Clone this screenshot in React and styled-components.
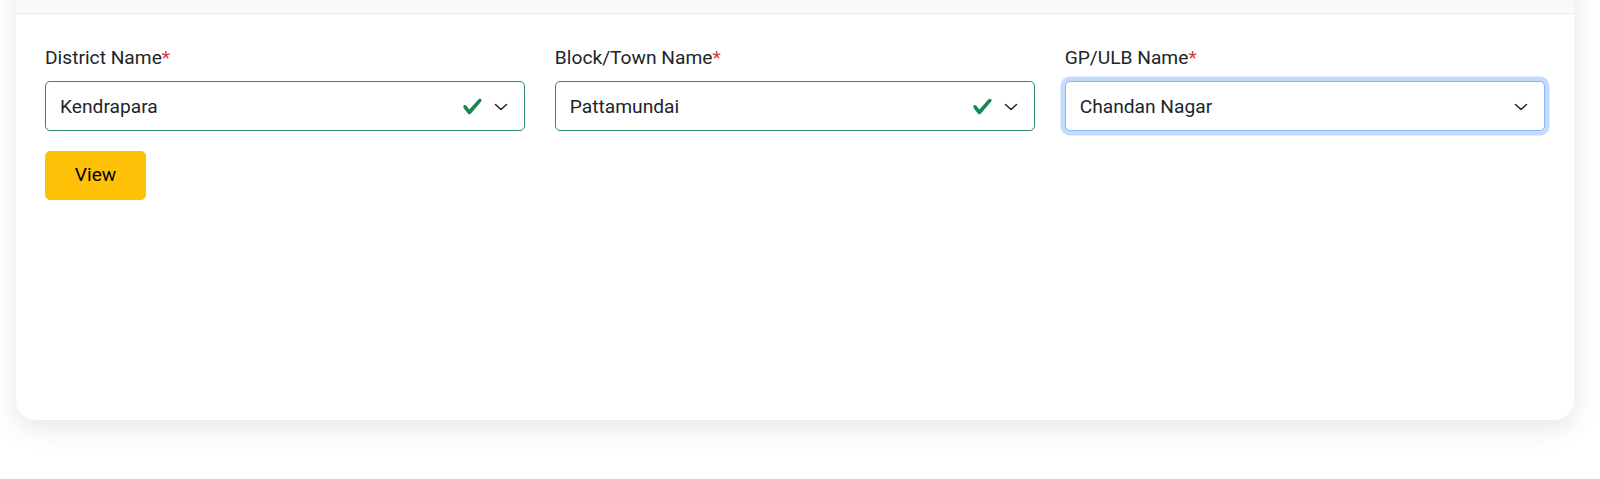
import React from "react";
import styled, { createGlobalStyle, css } from "styled-components";

const GlobalStyle = createGlobalStyle`
  html, body { margin: 0; padding: 0; background: #ffffff; }
  body { font-family: Roboto, "Liberation Sans", Arial, sans-serif; overflow: hidden; }
  * { box-sizing: border-box; }
`;

const Page = styled.div`
  padding: 0 26px 60px 16px;
`;

const Card = styled.section`
  margin-top: -30px;
  background: #ffffff;
  border-radius: 20px;
  box-shadow: 0 8px 28px rgba(0, 0, 0, 0.1);
  overflow: hidden;
`;

const CardHeader = styled.div`
  height: 44px;
  background: linear-gradient(#f4f4f4, #fafafa);
  border-bottom: 1px solid #ebebeb;
`;

const CardBody = styled.div`
  min-height: 406px;
  padding: 30px 29px 29px 29px;
`;

const FieldRow = styled.div`
  display: grid;
  grid-template-columns: repeat(3, 1fr);
  column-gap: 29.5px;
`;

const Field = styled.div`
  display: flex;
  flex-direction: column;
`;

const Label = styled.label`
  font-size: 19.2px;
  line-height: 27.6px;
  color: #212529;
  margin-bottom: 9.8px;
`;

const Required = styled.span`
  color: #dc3545;
`;

const SelectBox = styled.div`
  display: flex;
  align-items: center;
  height: 50px;
  padding: 1px 15px 0 14px;
  background: #ffffff;
  border: 1px solid #dee2e6;
  border-radius: 5px;
  font-size: 19.2px;
  line-height: 27.6px;
  color: #212529;
  ${(p) =>
    p.$state === "valid" &&
    css`
      border-color: #2a8a5c;
    `}
  ${(p) =>
    p.$state === "focus" &&
    css`
      border-color: #86b7fe;
      box-shadow: 0 0 0 4.5px rgba(13, 110, 253, 0.25);
    `}
`;

const SelectValue = styled.span`
  flex: 1;
  white-space: nowrap;
`;

const CheckIcon = styled.svg`
  width: 21px;
  height: 21px;
  margin-right: 10.5px;
  flex-shrink: 0;
`;

const ChevronIcon = styled.svg`
  width: 16px;
  height: 16px;
  flex-shrink: 0;
`;

const ViewButton = styled.button`
  margin-top: 19.4px;
  width: 101px;
  height: 49px;
  border: 1px solid #ffc107;
  border-radius: 5px;
  background: #ffc107;
  color: #000000;
  font-family: inherit;
  font-size: 19.2px;
  line-height: 27.6px;
  padding: 0;
  cursor: pointer;
`;

const Check = () => (
  <CheckIcon viewBox="0 0 8 8" aria-hidden="true">
    <path
      fill="#198754"
      d="M2.3 6.73.6 4.53c-.4-1.04.46-1.4 1.1-.8l1.1 1.4 3.4-3.8c.6-.63 1.6-.27 1.2.7l-4 4.6c-.43.5-.8.4-1.1.1z"
    />
  </CheckIcon>
);

const Chevron = () => (
  <ChevronIcon viewBox="0 0 16 16" aria-hidden="true">
    <path
      fill="none"
      stroke="#212529"
      strokeLinecap="round"
      strokeLinejoin="round"
      strokeWidth="1.5"
      d="M2.5 5.5 8 10.5l5.5-5"
    />
  </ChevronIcon>
);

const fields = [
  { label: "District Name", value: "Kendrapara", state: "valid" },
  { label: "Block/Town Name", value: "Pattamundai", state: "valid" },
  { label: "GP/ULB Name", value: "Chandan Nagar", state: "focus" },
];

export default function App() {
  return (
    <>
      <GlobalStyle />
      <Page>
        <Card>
          <CardHeader />
          <CardBody>
            <FieldRow>
              {fields.map((f) => (
                <Field key={f.label}>
                  <Label>
                    {f.label}
                    <Required>*</Required>
                  </Label>
                  <SelectBox $state={f.state}>
                    <SelectValue>{f.value}</SelectValue>
                    {f.state === "valid" && <Check />}
                    <Chevron />
                  </SelectBox>
                </Field>
              ))}
            </FieldRow>
            <ViewButton type="button">View</ViewButton>
          </CardBody>
        </Card>
      </Page>
    </>
  );
}
